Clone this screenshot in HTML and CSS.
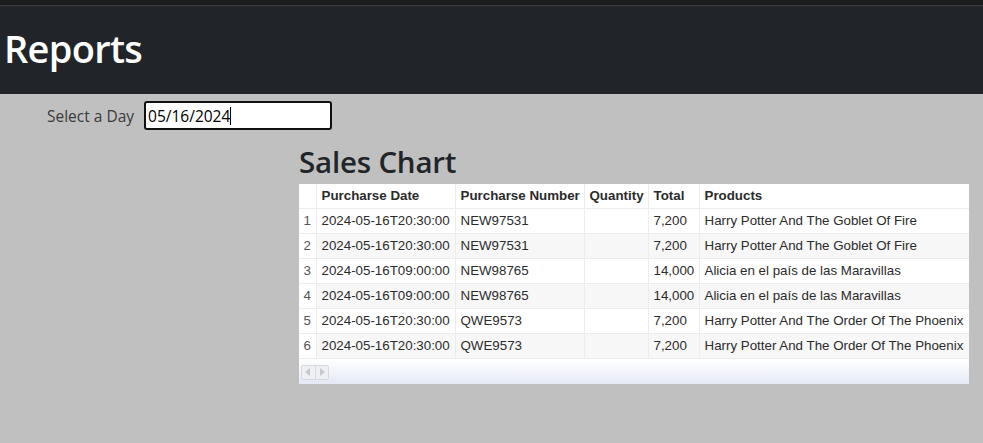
FILE: index.html
```html
<!DOCTYPE html>
<html>
<head>
<meta charset="utf-8">
<link rel="stylesheet" href="styles.css">
</head>
<body>
<div class="topstrip"></div>
<header class="header"><h1 class="title">Reports</h1></header>
<main class="main">
  <div class="form-row">
    <label class="label" for="day">Select a Day</label>
    <div class="input"><span class="input-text">05/16/2024</span><span class="caret"></span></div>
  </div>
  <section class="report">
    <h2 class="subtitle">Sales Chart</h2>
    <div class="grid">
      <table class="table">
        <colgroup>
          <col class="c-num"><col class="c-date"><col class="c-pn"><col class="c-qty"><col class="c-total"><col class="c-prod">
        </colgroup>
        <thead>
          <tr><th></th><th>Purcharse Date</th><th>Purcharse Number</th><th>Quantity</th><th>Total</th><th>Products</th></tr>
        </thead>
        <tbody>
          <tr><td class="num">1</td><td>2024-05-16T20:30:00</td><td>NEW97531</td><td></td><td>7,200</td><td>Harry Potter And The Goblet Of Fire</td></tr>
          <tr class="alt"><td class="num">2</td><td>2024-05-16T20:30:00</td><td>NEW97531</td><td></td><td>7,200</td><td>Harry Potter And The Goblet Of Fire</td></tr>
          <tr><td class="num">3</td><td>2024-05-16T09:00:00</td><td>NEW98765</td><td></td><td>14,000</td><td>Alicia en el país de las Maravillas</td></tr>
          <tr class="alt"><td class="num">4</td><td>2024-05-16T09:00:00</td><td>NEW98765</td><td></td><td>14,000</td><td>Alicia en el país de las Maravillas</td></tr>
          <tr><td class="num">5</td><td>2024-05-16T20:30:00</td><td>QWE9573</td><td></td><td>7,200</td><td>Harry Potter And The Order Of The Phoenix</td></tr>
          <tr class="alt"><td class="num">6</td><td>2024-05-16T20:30:00</td><td>QWE9573</td><td></td><td>7,200</td><td>Harry Potter And The Order Of The Phoenix</td></tr>
        </tbody>
      </table>
      <div class="grid-footer">
        <div class="scroll-btns">
          <span class="sbtn"><svg width="8" height="8" viewBox="0 0 8 8"><path d="M6 0 L1 4 L6 8 Z" fill="#c4c7cc"/></svg></span>
          <span class="sbtn"><svg width="8" height="8" viewBox="0 0 8 8"><path d="M2 0 L7 4 L2 8 Z" fill="#c4c7cc"/></svg></span>
        </div>
      </div>
    </div>
  </section>
</main>
</body>
</html>
```
FILE: styles.css
```css
* { box-sizing: border-box; }
html, body { margin: 0; padding: 0; }
body {
  background: #c0c0c0;
  font-family: "Open Sans", "Noto Sans", sans-serif;
  color: #212529;
  height: 443px;
  overflow: hidden;
}
.topstrip {
  height: 6px;
  background: #1b1c1e;
  border-bottom: 1px solid #3a3c40;
}
.header {
  background: #212529;
  height: 88px;
  padding: 18px 0 0 4px;
}
.title {
  margin: 0;
  color: #fff;
  font-size: 38px;
  font-weight: 600;
  line-height: 48px;
  letter-spacing: -0.7px;
}
.main { padding-top: 7px; }
.form-row {
  display: flex;
  align-items: center;
  height: 29px;
  padding-left: 47px;
}
.label {
  font-size: 15.5px;
  color: #3a3a3a;
  margin-right: 10px;
}
.input {
  width: 188px;
  height: 29px;
  background: #fff;
  border: 2px solid #111;
  border-radius: 3px;
  display: flex;
  align-items: center;
  padding-left: 2px;
  font-size: 15.5px;
  color: #000;
}
.caret {
  display: inline-block;
  width: 1px;
  height: 18px;
  background: #000;
}
.report { padding-left: 299px; padding-right: 14px; }
.subtitle {
  margin: 10px 0 0 0;
  font-size: 29.5px;
  font-weight: 600;
  line-height: 44px;
  letter-spacing: -0.2px;
  color: #212529;
}
.grid {
  background: #fff;
  width: 670px;
}
.table {
  border-collapse: collapse;
  table-layout: fixed;
  width: 670px;
  font-family: "Liberation Sans", Arial, sans-serif;
  font-size: 13.33px;
  color: #2b2b2b;
}
.c-num { width: 17px; }
.c-date { width: 139px; }
.c-pn { width: 129px; }
.c-qty { width: 64px; }
.c-total { width: 51px; }
.c-prod { width: 270px; }
.table th, .table td {
  height: 25px;
  padding: 0 0 0 5px;
  border: 1px solid #ececec;
  white-space: nowrap;
  overflow: hidden;
  text-align: left;
}
.table thead th { height: 24px; border-top: none; font-weight: bold; }
.table tr > :first-child { border-left: none; }
.table tr > :last-child { border-right: none; }
.table td.num { padding: 0; text-align: center; color: #555; }
.table tr.alt td { background: #f7f7f7; }
.table tr.alt td.num { background: #fff; }
.grid-footer {
  height: 25px;
  background: linear-gradient(#ffffff, #e4e9f5);
  padding: 6px 0 0 2px;
}
.scroll-btns {
  display: flex;
  width: 28px;
  height: 15px;
  border: 1px solid #d6d8dc;
  border-radius: 2px;
  background: #eef0f4;
}
.sbtn {
  flex: 1;
  display: flex;
  align-items: center;
  justify-content: center;
}
.sbtn + .sbtn { border-left: 1px solid #d6d8dc; }
```
